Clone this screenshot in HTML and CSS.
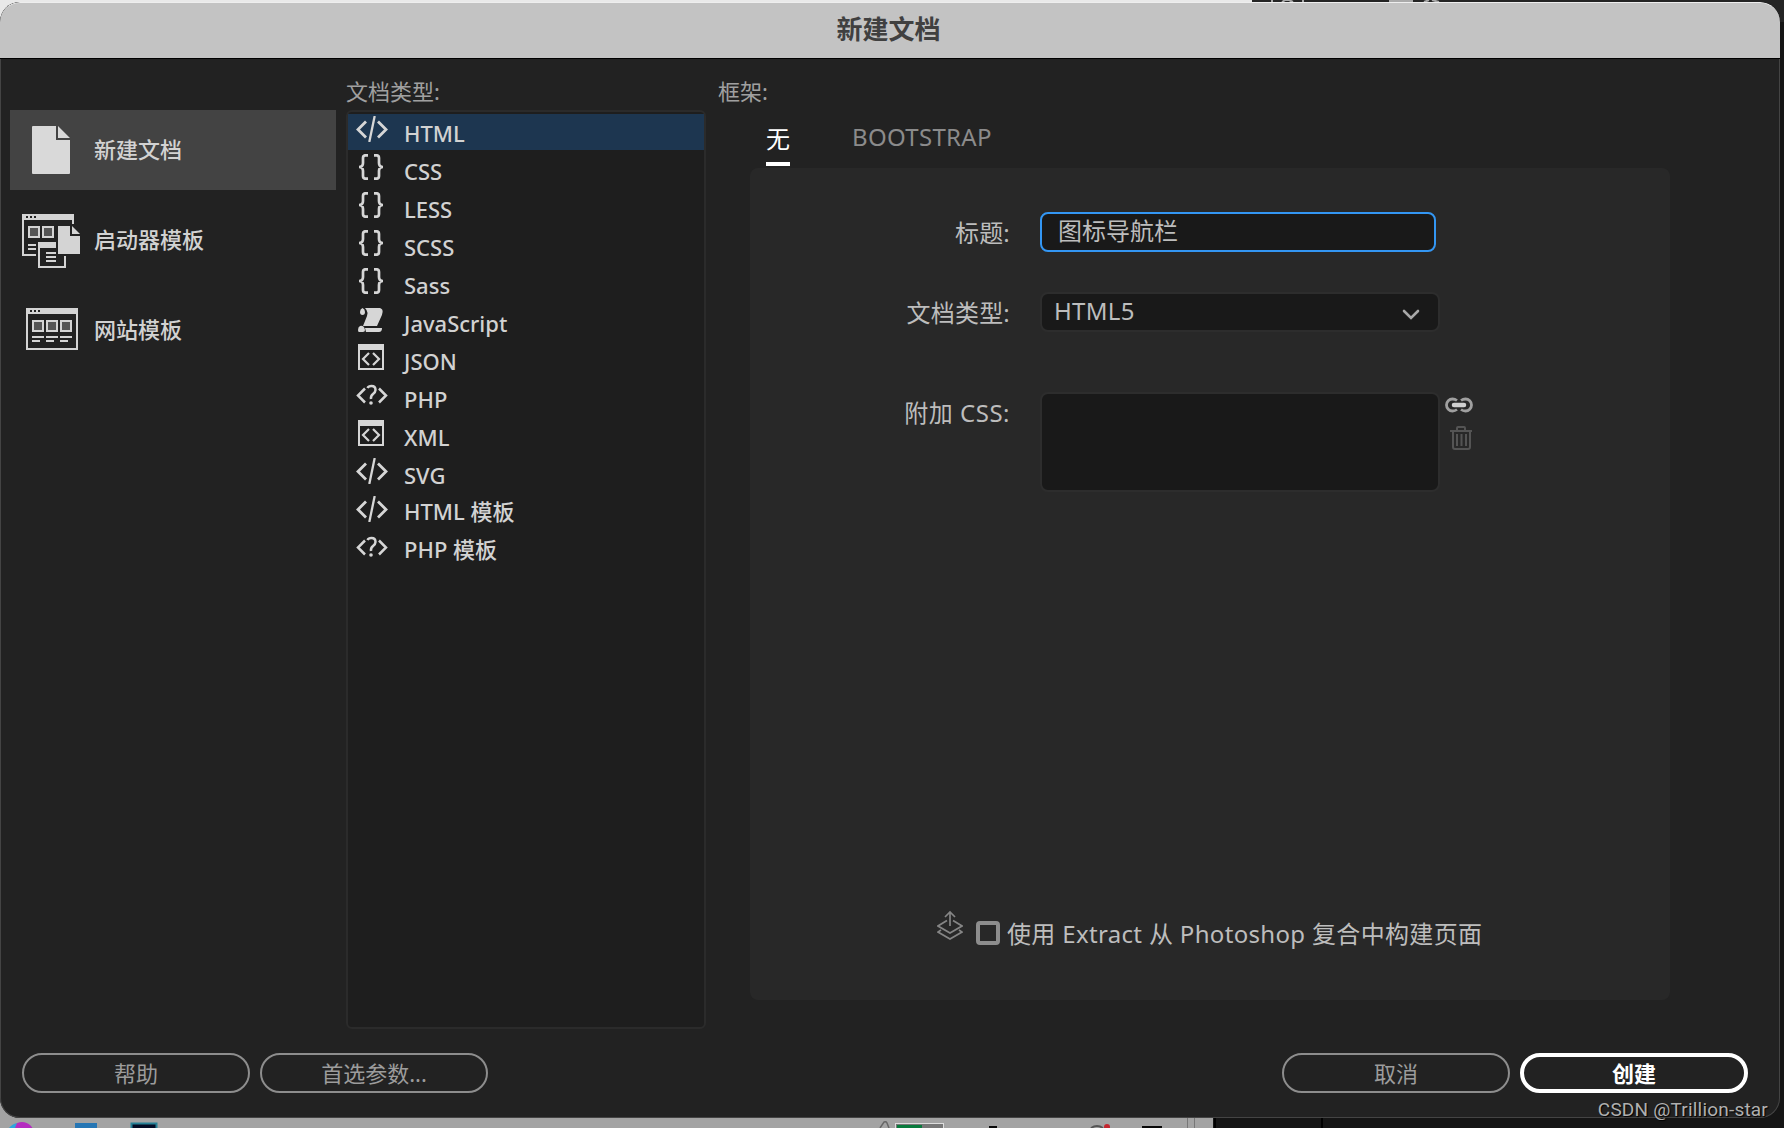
FILE: index.html
```html
<!DOCTYPE html>
<html lang="zh-CN">
<head>
    <meta charset="UTF-8">
    <title>新建文档</title>
    <link rel="stylesheet" href="styles.css">
</head>
<body>
    <!-- 桌面背景 -->
    <svg class="desktop" width="1784" height="1128" viewBox="0 0 1784 1128">
        <rect width="1784" height="1128" fill="#151515"/>
        <rect width="1252" height="60" fill="#e9e9e9"/>
        <rect x="1252" width="532" height="22" fill="#242424"/>
        <path d="M1272 0v2M1303 0v2M1282 2l5-3 6 3M1389 1h24M1401 0v2M1424 2l5-2M1432 0l7 2" stroke="#aaa" stroke-width="2" fill="none"/>
        <rect y="1060" width="1213" height="68" fill="#a3a3a3"/>
        <circle cx="22" cy="1134" r="12" fill="#b52dc0"/>
        <path d="M9 1128a14 14 0 0 1 8-5l-2 5z" fill="#30a5dc"/>
        <rect x="75" y="1123" width="22" height="8" fill="#2676b4"/>
        <rect x="131.500" y="1123.500" width="25" height="9" fill="#020b24" stroke="#268095" stroke-width="2"/>
        <path d="M880 1128l4-6q2-1 3 1l2 5" fill="none" stroke="#666" stroke-width="1.500"/>
        <rect x="895.500" y="1123.500" width="48" height="9" fill="#777" stroke="#ddd"/>
        <rect x="897" y="1125" width="25" height="3" fill="#087a3c"/>
        <path d="M989 1127h8M1142 1127h20" stroke="#080808" stroke-width="2"/>
        <path d="M1091 1128q6-4 12 0" fill="none" stroke="#555" stroke-width="2"/>
        <circle cx="1107" cy="1127" r="3" fill="#c42730"/>
        <path d="M1187.500 1118v10M1194.500 1118v10" stroke="#777"/>
        <path d="M1215 1118v10M1322 1118v10" stroke="#000" stroke-width="2"/>
    </svg>

    <div class="dialog">
        <div class="title-bar">新建文档</div>
        <div class="content">
            <div class="sidebar">
                <div class="side-item active">
                    <svg class="side-icon" width="60" height="60" viewBox="0 0 60 60">
                        <path d="M12 7q0-1 1-1h23v14h14v33q0 1-1 1H13q-1 0-1-1zM38 6l12 12H38z" fill="#d9d9d9"/>
                    </svg>
                    <span>新建文档</span>
                </div>
                <div class="side-item">
                    <svg class="side-icon" width="60" height="60" viewBox="0 0 60 60">
                        <g fill="none" stroke="#d4d4d4" stroke-width="2">
                            <path d="M53 14V5H3v40h13"/>
                            <path d="M9 17h10v10H9zM23 17h10v10H23z" fill="#555"/>
                            <path d="M8 35h8M8 39h8M26 43h10M26 47h10M26 51h10"/>
                            <path d="M19 33v24h26V46"/>
                        </g>
                        <path d="M2 4h52v6H2zM18 32h18v6H18zM38 16h12v10h10v18H38zM52 16l8 8h-8z" fill="#d4d4d4"/>
                        <path d="M6 6h2v2H6zM10 6h2v2h-2zM14 6h2v2h-2z" fill="#222"/>
                    </svg>
                    <span>启动器模板</span>
                </div>
                <div class="side-item">
                    <svg class="side-icon" width="60" height="60" viewBox="0 0 60 60">
                        <g fill="none" stroke="#d4d4d4" stroke-width="2">
                            <rect x="7" y="9" width="50" height="40"/>
                            <path d="M13 21h10v10H13zM27 21h10v10H27zM41 21h10v10H41z" fill="#555"/>
                            <path d="M12 37h12M26 37h12M40 37h12M12 41h8M26 41h8M40 41h8"/>
                        </g>
                        <path d="M6 9q0-1 1-1h50q1 0 1 1v5H6z" fill="#d4d4d4"/>
                        <path d="M10 10h2v2h-2zM14 10h2v2h-2zM18 10h2v2h-2z" fill="#222"/>
                    </svg>
                    <span>网站模板</span>
                </div>
            </div>

            <div class="type-column">
                <div class="column-label">文档类型:</div>
                <ul class="type-list">
                    <li class="selected"><svg class="type-icon"><use href="#tag"/></svg><span>HTML</span></li>
                    <li><svg class="type-icon"><use href="#braces"/></svg><span>CSS</span></li>
                    <li><svg class="type-icon"><use href="#braces"/></svg><span>LESS</span></li>
                    <li><svg class="type-icon"><use href="#braces"/></svg><span>SCSS</span></li>
                    <li><svg class="type-icon"><use href="#braces"/></svg><span>Sass</span></li>
                    <li><svg class="type-icon"><use href="#scroll"/></svg><span>JavaScript</span></li>
                    <li><svg class="type-icon"><use href="#window"/></svg><span>JSON</span></li>
                    <li><svg class="type-icon"><use href="#php"/></svg><span>PHP</span></li>
                    <li><svg class="type-icon"><use href="#window"/></svg><span>XML</span></li>
                    <li><svg class="type-icon"><use href="#tag"/></svg><span>SVG</span></li>
                    <li class="cjk"><svg class="type-icon"><use href="#tag"/></svg><span>HTML 模板</span></li>
                    <li class="cjk"><svg class="type-icon"><use href="#php"/></svg><span>PHP 模板</span></li>
                </ul>
            </div>

            <div class="frame-column">
                <div class="column-label">框架:</div>
                <div class="tabs">
                    <div class="tab current">无</div>
                    <div class="tab">BOOTSTRAP</div>
                </div>
                <div class="panel">
                    <div class="form-row title-row">
                        <label>标题:</label>
                        <div class="field title-input">图标导航栏</div>
                    </div>
                    <div class="form-row doctype-row">
                        <label>文档类型:</label>
                        <div class="field select">
                            <span>HTML5</span>
                            <svg width="18" height="12" viewBox="0 0 18 12"><path d="M2 2l7 7 7-7" fill="none" stroke="#a8a8a8" stroke-width="2.600" stroke-linecap="round"/></svg>
                        </div>
                    </div>
                    <div class="form-row css-row">
                        <label>附加 CSS:</label>
                        <div class="field css-box"></div>
                        <div class="css-tools">
                            <svg width="28" height="16" viewBox="0 0 28 16" fill="none">
                                <path d="M12 3.500Q10 2 7.500 2a6 6 0 0 0 0 12Q10 14 12 12.500M16 3.500Q18 2 20.500 2a6 6 0 0 1 0 12Q18 14 16 12.500" stroke="#a0a0a0" stroke-width="2.800"/>
                                <path d="M9 8h10" stroke="#d0d0d0" stroke-width="4.500" stroke-linecap="round"/>
                            </svg>
                            <svg class="trash" width="22" height="24" viewBox="0 0 22 24" fill="none" stroke="#545454" stroke-width="2">
                                <path d="M0 5h22M7 4V2q0-1 1-1h6q1 0 1 1v2M3 6v15q0 2 2 2h13q2 0 2-2V6M7 8v12M11.500 8v12M16 8v12"/>
                            </svg>
                        </div>
                    </div>
                    <div class="extract">
                        <svg class="extract-icon" width="26" height="30" viewBox="0 0 26 30" fill="none" stroke="#858585" stroke-width="1.700">
                            <path d="M13 16V2M8 7l5-5 5 5M10 10.500L1 16l12 7 12-7-9-5.500M4 20l-3 2 12 7 12-7-3-2"/>
                        </svg>
                        <span class="checkbox"></span>
                        <span class="extract-text">使用 Extract 从 Photoshop 复合中构建页面</span>
                    </div>
                </div>
            </div>
        </div>
        <div class="footer">
            <button class="btn">帮助</button>
            <button class="btn">首选参数...</button>
            <button class="btn cancel">取消</button>
            <button class="btn primary">创建</button>
        </div>
    </div>
    <div class="watermark">CSDN @Trillion-star</div>

    <!-- 列表图标 -->
    <svg class="symbols">
        <symbol id="tag" viewBox="0 0 32 26">
            <path d="M10 5.500L2 13.500l8 8M22 5.500l8 8-8 8" fill="none" stroke="#d6d6d6" stroke-width="2.800"/>
            <path d="M18.700 0L13.300 26" stroke="#d6d6d6" stroke-width="2.300"/>
        </symbol>
        <symbol id="braces" viewBox="0 0 32 26">
            <path d="M12 1.300H9.500Q7 1.300 7 4v5q0 4-4 4 4 0 4 4v5q0 2.700 2.500 2.700H12M18 1.300h2.500Q23 1.300 23 4v5q0 4 4 4-4 0-4 4v5q0 2.700-2.500 2.700H18" fill="none" stroke="#d6d6d6" stroke-width="2.700"/>
        </symbol>
        <symbol id="scroll" viewBox="0 0 32 26">
            <path d="M9 2h15q3 1 2.600 4-.3 3-2 6l-3.600 8H7l4-10q1-4-.5-6zM6.500 2Q9 3 9 6q0 3-2.500 3T4 6q0-3 2.500-4zM4 20q4-1 5 4 0 2-2 2H3q-1 0-1-2 0-3 2-4zM9 22h17q0 4-3 4H10z" fill="#d6d6d6"/>
        </symbol>
        <symbol id="window" viewBox="0 0 32 26">
            <path d="M3 1h24v24H3z" fill="none" stroke="#d6d6d6" stroke-width="2"/>
            <path d="M2 0h26v6H2z" fill="#d6d6d6"/>
            <path d="M13 9l-6 6 6 6M17 9l6 6-6 6" fill="none" stroke="#d6d6d6" stroke-width="2.200"/>
        </symbol>
        <symbol id="php" viewBox="0 0 32 26">
            <path d="M9 6.500l-7 7 7 7M23 6.500l7 7-7 7M11.500 6q1-2 4-2 4 0 4 4 0 2-2.500 4T15 17" fill="none" stroke="#d6d6d6" stroke-width="2.500"/>
            <circle cx="15" cy="21" r="1.800" fill="#d6d6d6"/>
        </symbol>
    </svg>
</body>
</html>
```

FILE: styles.css
```css
* {
    box-sizing: border-box;
}

body {
    margin: 0;
    width: 1784px;
    height: 1128px;
    overflow: hidden;
    background: #151515;
    color: #d2d2d2;
    font-family: "Noto Sans", "Noto Sans CJK SC", sans-serif;
    font-size: 22px;
}

.desktop {
    position: absolute;
    left: 0;
    top: 0;
}

.symbols {
    position: absolute;
    width: 0;
    height: 0;
}

.dialog {
    position: relative;
    width: 1780px;
    height: 1116px;
    margin-top: 2px;
    display: flex;
    flex-direction: column;
    background: #222;
    border-radius: 20px;
    box-shadow: inset 0 0 0 1px #444;
    overflow: hidden;
}

.title-bar {
    height: 57px;
    flex: none;
    background: #c3c3c3;
    border-top: 1px solid #eee;
    border-bottom: 1px solid #000;
    border-radius: 20px 20px 0 0;
    color: #404040;
    font-size: 26px;
    font-weight: 700;
    line-height: 52px;
    padding-right: 3px;
    text-align: center;
}

.content {
    display: flex;
    height: 971px;
}

/* 左侧分类 */
.sidebar {
    width: 326px;
    margin: 51px 10px 0;
}

.side-item {
    display: flex;
    align-items: center;
    height: 80px;
    margin-bottom: 10px;
    padding-left: 10px;
    font-weight: 500;
}

.side-item span {
    padding-bottom: 5px;
}

.side-item.active {
    background: #434343;
}

.side-icon {
    margin-right: 14px;
}

.column-label {
    height: 51px;
    padding-top: 16px;
    line-height: 32px;
    color: #a0a0a0;
}

/* 文档类型列表 */
.type-column {
    width: 360px;
}

.type-list {
    height: 919px;
    margin: 0;
    padding: 2px 0;
    list-style: none;
    background: #1e1e1e;
    border: 2px solid #2b2b2b;
    border-radius: 6px;
}

.type-list li {
    display: flex;
    height: 38px;
    padding-left: 8px;
    font-weight: 500;
    line-height: 38px;
}

.type-list li.selected {
    background: linear-gradient(#1d3650, #1d3650) no-repeat 0 0 / 100% 36px;
}

.type-list li.cjk {
    line-height: 34px;
}

.type-icon {
    width: 32px;
    height: 26px;
    margin: 2px 16px 0 0;
}

/* 框架设置 */
.frame-column {
    width: 952px;
    padding-left: 12px;
}

.tabs {
    display: flex;
    height: 58px;
    padding-left: 48px;
    font-size: 24px;
}

.tab {
    height: 56px;
    margin-right: 62px;
    line-height: 54px;
    letter-spacing: 0.3px;
    color: #8b8b8b;
}

.tab.current {
    color: #fff;
    line-height: 58px;
    letter-spacing: 0;
    border-bottom: 4px solid #fff;
}

.panel {
    display: flex;
    flex-direction: column;
    width: 920px;
    height: 832px;
    margin-left: 32px;
    padding-top: 44px;
    background: #282828;
    border-radius: 8px;
    font-size: 24px;
    color: #bdbdbd;
}

.form-row {
    display: flex;
}

.form-row label {
    width: 260px;
    margin-right: 30px;
    line-height: 42px;
    letter-spacing: 0.2px;
    text-align: right;
}

.title-row {
    height: 80px;
}

.doctype-row {
    height: 100px;
}

.css-row label {
    letter-spacing: 0.5px;
}

.field {
    background: #191919;
    border: 2px solid #2d2d2d;
    border-radius: 8px;
}

.title-input {
    width: 396px;
    height: 40px;
    padding-left: 16px;
    border-color: #3396f3;
    line-height: 34px;
}

.select {
    display: flex;
    justify-content: space-between;
    align-items: center;
    width: 400px;
    height: 40px;
    padding: 0 18px 2px 12px;
    line-height: 34px;
    letter-spacing: 0.3px;
}

.select svg {
    margin-top: 8px;
}

.css-box {
    width: 400px;
    height: 100px;
}

.css-tools {
    display: flex;
    flex-direction: column;
    margin: 5px 0 0 5px;
}

.trash {
    margin: 13px 0 0 5px;
}

.extract {
    display: flex;
    margin: auto 0 50px 187px;
    height: 40px;
    line-height: 48px;
}

.checkbox {
    width: 24px;
    height: 24px;
    margin: 11px 7px 0 13px;
    border: 4px solid #8d8d8d;
    border-radius: 4px;
}

.extract-text {
    white-space: nowrap;
    letter-spacing: 0.33px;
}

/* 底部按钮 */
.footer {
    display: flex;
    gap: 10px;
    margin-top: -1px;
    padding: 24px 32px 0 22px;
}

.btn {
    width: 228px;
    height: 40px;
    padding: 0 0 1px;
    background: none;
    border: 2px solid #8d8d8d;
    border-radius: 20px;
    color: #9c9c9c;
    font: inherit;
    line-height: 32px;
}

.cancel {
    margin-left: auto;
}

.primary {
    border: 4px solid #fff;
    color: #fff;
    font-weight: 700;
    line-height: 28px;
}

.watermark {
    position: absolute;
    right: 16px;
    top: 1098px;
    color: #b0b0b0;
    font-family: Roboto, sans-serif;
    font-size: 19px;
    letter-spacing: 0.2px;
    line-height: 24px;
    text-shadow: 1px 1px 1px #000;
}
```
